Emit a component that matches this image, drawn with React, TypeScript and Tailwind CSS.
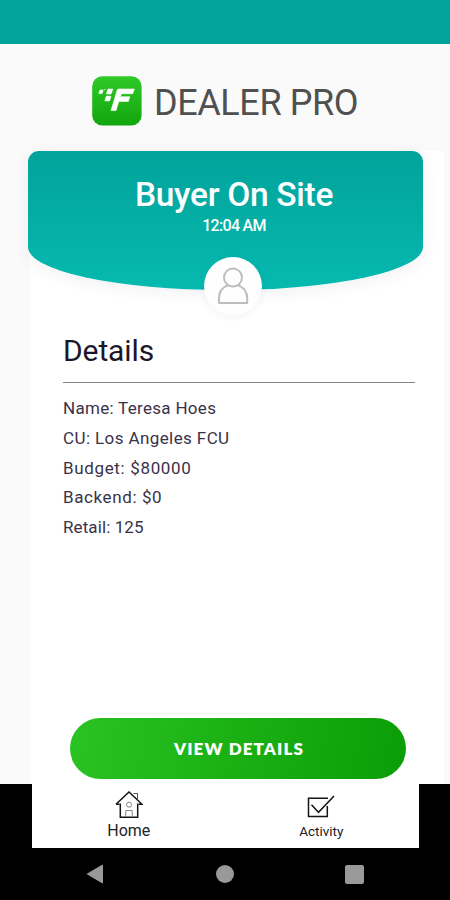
// Buyer arrival screen: brand bar, hero card, detail lines and the bottom tabs.
import type { ReactNode } from 'react'

type Detail = { label: string; value: string; spacing: string }

const DETAILS: Detail[] = [
  { label: 'Name', value: 'Teresa Hoes', spacing: 'tracking-[0.3px]' },
  { label: 'CU', value: 'Los Angeles FCU', spacing: 'tracking-[0.4px]' },
  { label: 'Budget', value: '$80000', spacing: 'tracking-[0.65px]' },
  { label: 'Backend', value: '$0', spacing: 'tracking-[0.6px]' },
  { label: 'Retail', value: '125', spacing: 'tracking-[0.1px]' },
]

function BrandMark() {
  return (
    <svg width="50" height="50" viewBox="0 0 50 50" aria-hidden="true">
      <defs>
        <linearGradient id="mark" x1="0" y1="0" x2="0" y2="1">
          <stop offset="0" stopColor="#2fc928" />
          <stop offset="1" stopColor="#12a60e" />
        </linearGradient>
      </defs>
      <rect x="0.2" y="0.2" width="49.4" height="49.2" rx="10" fill="url(#mark)" />
      <g fill="#fff" stroke="#fff" strokeWidth="0.6" strokeLinejoin="round">
        <path d="M26 13h16.300l-1.600 4.700H29.400l-1 3h9.400l-1.500 4.700h-9.500L24 34.500h-5l5.500-18.200q.7-3.300 1.500-3.300z" />
        <path d="M16 13h4.800l-1.700 5h-4.800z" />
        <path d="M14.300 20.300H19l-1.500 4.600h-4.600z" />
        <path d="M8 14h3.200l-1.200 3.600H6.800z" />
        <path d="M12.200 12.900h1.200l-.3 1.200h-1.200z" stroke="none" opacity="0.8" />
      </g>
    </svg>
  )
}

function PersonIcon() {
  return (
    <svg width="32" height="38" viewBox="0 0 32 38" fill="none" stroke="#bdbdbd" strokeWidth="2" aria-hidden="true">
      <circle cx="16" cy="10.500" r="9" />
      <path d="M11 18.200C5 20.300 2 25 2 31.500V36h28.200v-4.500c0-6.500-3-11.200-9.200-13.300" strokeLinejoin="round" />
    </svg>
  )
}

function HomeIcon() {
  return (
    <svg width="28" height="28" viewBox="0 0 28 28" fill="none" stroke="#151515" strokeWidth="1.5" aria-hidden="true">
      <path d="M1 13.300 14 1l13 12.300h-3.500M1 13.300h3.500" />
      <path d="M5.300 12.500V26.300h17.400V12.500" />
      <path d="M18.500 2.500h4v6" strokeWidth="1" stroke="#555" />
      <circle cx="14" cy="13.700" r="2.500" strokeWidth="0.900" stroke="#777" />
      <path d="M10.800 26v-6.500h6.400V26" strokeWidth="0.900" stroke="#777" />
    </svg>
  )
}

function ActivityIcon() {
  return (
    <svg width="28" height="23" viewBox="0 0 28 23" fill="none" stroke="#151515" aria-hidden="true">
      <path d="M21 3.300H1.500v18.200h18.800V11" strokeWidth="1.500" />
      <path d="M4.500 9.800l7 7.500L27 1" strokeWidth="1.500" />
    </svg>
  )
}

function Tab({ icon, children }: { icon: ReactNode; children: ReactNode }) {
  return (
    <button type="button" className="flex flex-1 flex-col items-center">
      {icon}
      {children}
    </button>
  )
}

export default function App() {
  return (
    <div className="flex h-[900px] w-[450px] flex-col overflow-hidden bg-[#fafafa] font-['Roboto',sans-serif]">
      <div className="h-11 shrink-0 bg-[#01a39b]" />

      <header className="flex h-[107px] shrink-0 items-center pl-[92px] pt-[6px]">
        <BrandMark />
        <h1 className="ml-[12px] mt-[5px] whitespace-nowrap text-[36px] font-normal leading-[42px] tracking-[-0.4px] text-[#505050]">DEALER PRO</h1>
      </header>

      <main className="ml-[30px] mr-[6px] flex h-[633px] shrink-0 flex-col bg-white">
        <section className="relative -ml-[2px] flex h-[139px] w-[395px] flex-col items-center rounded-[11px_11px_50%_50%/11px_11px_43px_43px] bg-linear-to-b from-[#02a39b] to-[#06b9af] pl-[17px] text-white shadow-[0_3px_16px_rgba(40,40,90,0.07)]">
          <h2 className="mt-[23px] whitespace-nowrap text-[33.5px] font-medium leading-[42px] tracking-[-0.3px]">Buyer On Site</h2>
          <p className="mt-[1px] whitespace-nowrap text-[16px] font-medium leading-[18px] tracking-[-0.7px]">12:04 AM</p>
          <div className="absolute left-[176px] top-[106px] flex size-[58px] items-center justify-center rounded-full bg-[#fefeff] shadow-[0_2px_8px_rgba(40,40,90,0.05)]">
            <PersonIcon />
          </div>
        </section>

        <section className="ml-[33px] mr-[29px] mt-[41px]">
          <h3 className="h-[52px] border-b border-[#858585] text-[30px] leading-[40px] tracking-[-0.1px] text-[#1d162b]">Details</h3>
          <ul className="mt-[11px] text-[17px] leading-[29.75px] text-[#3a3248]">
            {DETAILS.map((d) => (
              <li key={d.label} className={`whitespace-nowrap ${d.spacing}`}>
                {d.label}: {d.value}
              </li>
            ))}
          </ul>
        </section>

        <button
          type="button"
          className="mb-[5px] ml-[40px] mt-auto h-[61px] w-[336px] rounded-full bg-linear-[100deg] from-[#29c322] to-[#0b9d06] pl-[2px] font-['Lato',sans-serif] text-[17px] font-extrabold tracking-[1.1px] text-white"
        >
          VIEW DETAILS
        </button>
      </main>

      <footer className="flex-1 bg-black">
        <nav className="ml-[32px] mr-[31px] flex h-[64px] bg-white pt-[7px] text-[#222]">
          <Tab icon={<HomeIcon />}>
            <span className="mt-[1px] text-[16px] leading-[22px]">Home</span>
          </Tab>
          <Tab
            icon={
              <span className="-ml-[2px] mt-[4px]">
                <ActivityIcon />
              </span>
            }
          >
            <span className="-ml-[2px] mt-[3px] text-[13.5px] leading-[20px]">Activity</span>
          </Tab>
        </nav>
        <div className="flex h-[52px] items-center justify-between px-[86px]">
          <svg width="18" height="20" viewBox="0 0 18 20" fill="#999" aria-hidden="true">
            <path d="M.5 10 16 .800q1-.3 1 .8v16.800q0 1.100-1 .8z" />
          </svg>
          <span className="size-[18px] rounded-full bg-[#999]" />
          <span className="size-[19px] rounded-[2px] bg-[#999]" />
        </div>
      </footer>
    </div>
  )
}
